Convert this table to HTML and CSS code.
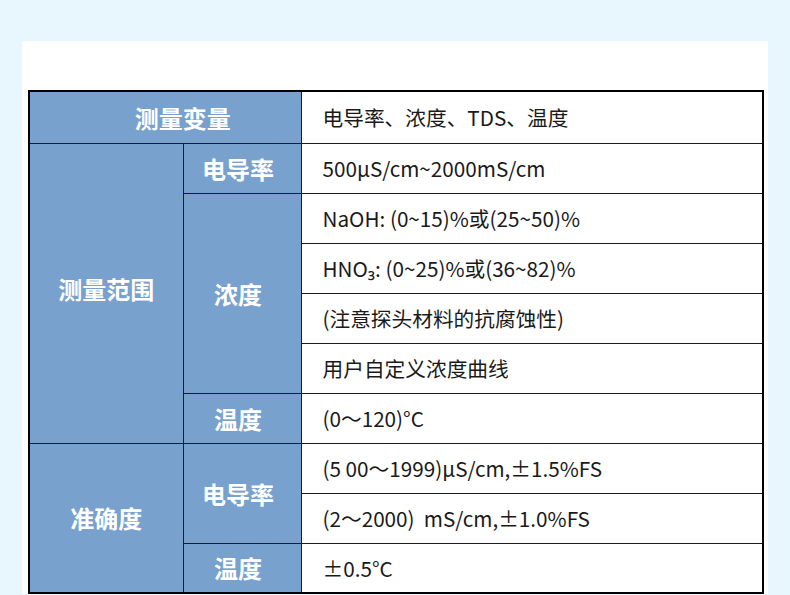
FILE: index.html
```html
<!DOCTYPE html>
<html lang="zh-CN">
<head>
<meta charset="utf-8">
<title>测量参数</title>
<link rel="stylesheet" href="styles.css">
</head>
<body>
<div class="panel">
  <table class="spec">
    <colgroup>
      <col class="c1">
      <col class="c2">
      <col class="c3">
    </colgroup>
    <tr class="first">
      <th colspan="2" class="shift">测量变量</th>
      <td>电导率、浓度、TDS、温度</td>
    </tr>
    <tr>
      <th rowspan="6" class="up">测量范围</th>
      <th class="sub">电导率</th>
      <td>500μS/cm~2000mS/cm</td>
    </tr>
    <tr>
      <th rowspan="4" class="sub">浓度</th>
      <td>NaOH: (0~15)%或(25~50)%</td>
    </tr>
    <tr>
      <td>HNO₃: (0~25)%或(36~82)%</td>
    </tr>
    <tr>
      <td>(注意探头材料的抗腐蚀性)</td>
    </tr>
    <tr>
      <td>用户自定义浓度曲线</td>
    </tr>
    <tr>
      <th class="sub">温度</th>
      <td>(0～120)°C</td>
    </tr>
    <tr>
      <th rowspan="3">准确度</th>
      <th rowspan="2" class="sub">电导率</th>
      <td>(5 00～1999)μS/cm,±1.5%FS</td>
    </tr>
    <tr>
      <td class="pre">(2～2000)  mS/cm,±1.0%FS</td>
    </tr>
    <tr>
      <th class="sub">温度</th>
      <td>±0.5°C</td>
    </tr>
  </table>
</div>
</body>
</html>
```

FILE: styles.css
```css
html, body {
  margin: 0;
  padding: 0;
  background: #e8f6fe;
}

body {
  font-family: "Noto Sans CJK SC", "Noto Sans", sans-serif;
  overflow: hidden;
}

.panel {
  margin: 41px 22px 0 22px;
  background: #ffffff;
  padding: 49px 4px 0 6px;
}

.spec {
  width: 736px;
  table-layout: fixed;
  border-collapse: collapse;
  border: 2px solid #000;
}

.c1 { width: 154px; }
.c2 { width: 118px; }
.c3 { width: auto; }

.spec th,
.spec td {
  border: 1px solid #1c1c1c;
  height: 50px;
  padding: 0;
  box-sizing: border-box;
}

.spec tr.first th,
.spec tr.first td {
  height: 52px;
}

.spec th {
  background: #78a1cd;
  color: #ffffff;
  font-size: 24px;
  font-weight: 700;
  text-align: center;
  vertical-align: middle;
}

.spec th.shift {
  padding-left: 35px;
}

.spec th.up {
  padding-bottom: 10px;
}

.spec th.sub {
  padding-right: 8px;
}

.spec td {
  color: #1a1a1a;
  font-size: 20.7px;
  font-weight: 400;
  padding-left: 21px;
  text-align: left;
  vertical-align: middle;
  white-space: nowrap;
}

.spec td.pre {
  white-space: pre;
}
```
